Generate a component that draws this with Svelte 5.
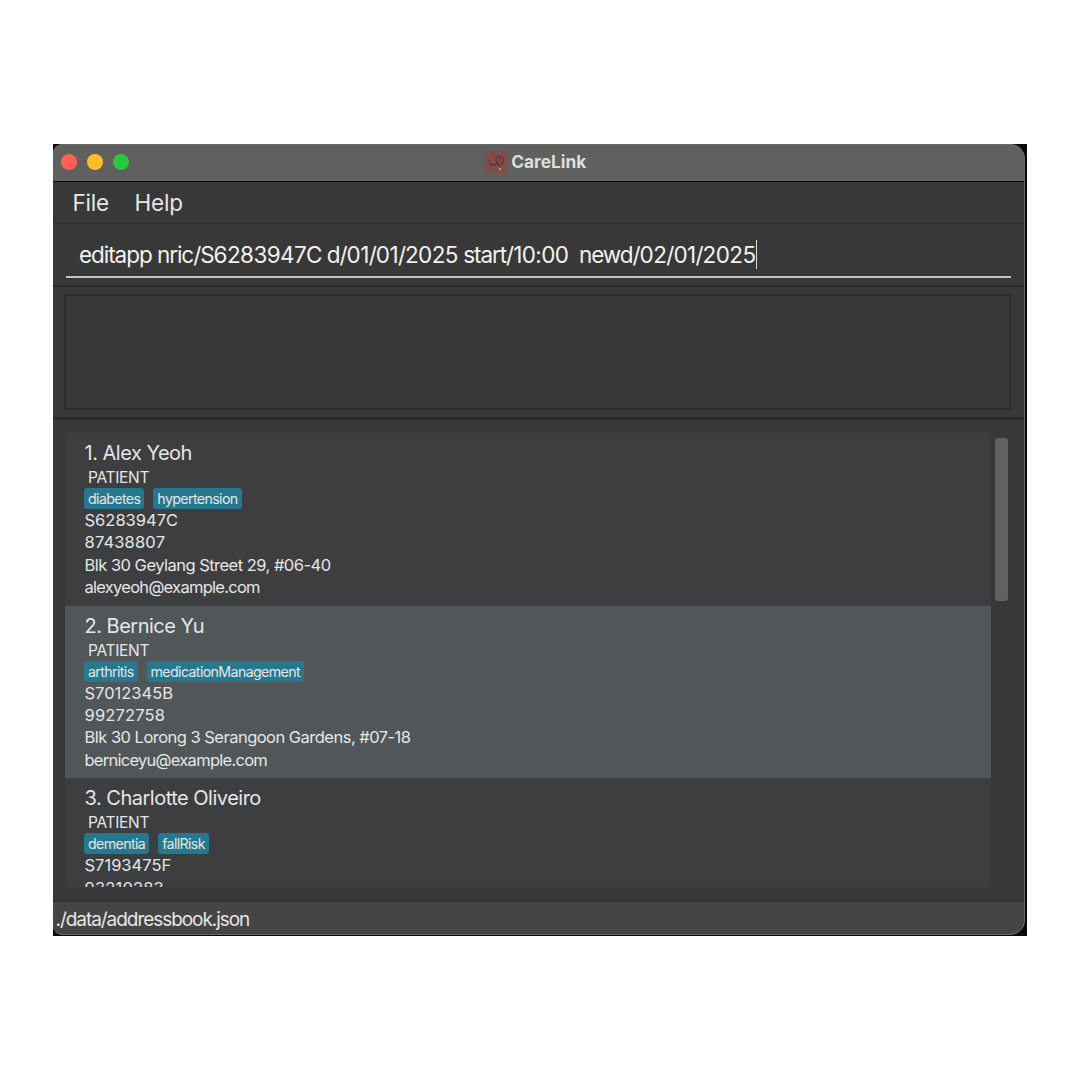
<script>
  const command = 'editapp nric/S6283947C d/01/01/2025 start/10:00\u00a0 newd/02/01/2025';
  // Numbers are tracked wider than words in the command field.
  const runs = command.split(/([\d:]+)/).filter(Boolean);
  const people = [
    { name: '1. Alex Yeoh', tags: ['diabetes', 'hypertension'], id: 'S6283947C', phone: '87438807', address: 'Blk 30 Geylang Street 29, #06-40', email: 'alexyeoh@example.com' },
    { name: '2. Bernice Yu', tags: ['arthritis', 'medicationManagement'], id: 'S7012345B', phone: '99272758', address: 'Blk 30 Lorong 3 Serangoon Gardens, #07-18', email: 'berniceyu@example.com' },
    { name: '3. Charlotte Oliveiro', tags: ['dementia', 'fallRisk'], id: 'S7193475F', phone: '93210283' }
  ];
</script>

<main>
  <div class="backdrop">
    <div class="window">
      <header>
        <div class="lights"><i class="red"></i><i class="amber"></i><i class="green"></i></div>
        <div class="title">
          <svg width="22" height="22" viewBox="0 0 22 22">
            <rect width="22" height="22" rx="1" fill="#834b49" />
            <g fill="none" stroke="#4b3533" stroke-width="1">
              <path d="M4 9c0 5 5 6 8 3.500M5 14c3 1 5-.5 7-2.500M12 12C9 8 12 4 15 6c4-1 5 4 2 7-2 2-4 1.500-5-1" />
              <path d="M12 12c1 2 2 2.500 3 4M15 6c.5 2-.5 4-3 6" />
            </g>
            <circle cx="15" cy="18" r="1.300" fill="#a89a98" />
          </svg>
          <span>CareLink</span>
        </div>
      </header>
      <nav><span>File</span><span>Help</span></nav>
      <section class="command">
        <div class="field"><span class="text">{#each runs as r}<span class:num={/^\d/.test(r)}>{r}</span>{/each}</span><b class="caret"></b></div>
      </section>
      <section class="result"><div class="box"></div></section>
      <section class="content">
        <div class="list">
          {#each people as p, i}
            <article class:alt={i % 2 === 1}>
              <h2>{p.name}</h2>
              <div class="role">PATIENT</div>
              <div class="tags">{#each p.tags as t}<span>{t}</span>{/each}</div>
              <p class="id">{p.id}</p>
              <p class="phone">{p.phone}</p>
              {#if p.address}<p class="address">{p.address}</p>{/if}
              {#if p.email}<p class="email">{p.email}</p>{/if}
            </article>
          {/each}
        </div>
        <div class="scroll"><div class="thumb"></div></div>
      </section>
      <footer>./data/addressbook.json</footer>
    </div>
  </div>
</main>

<style>
  :global(body) { background: #fff; }
  main { box-sizing: border-box; width: 1080px; height: 1080px; padding: 144px 53px; overflow: hidden; font-family: Inter, "Liberation Sans", sans-serif; font-weight: 370; color: #e6e6e6; }
  .backdrop { box-sizing: border-box; width: 974px; height: 792px; background: #090909; padding: 0 2px 1px 0; }
  .window { position: relative; box-sizing: border-box; width: 972px; height: 791px; border-radius: 9px 15px 15px 9px; overflow: hidden; display: flex; flex-direction: column; background: #383838; }
  .window::after { content: ''; position: absolute; inset: 0; border: solid #686868; border-width: 1px 1px 1px 0; border-radius: inherit; pointer-events: none; }
  header { flex: none; height: 38px; box-sizing: border-box; border-bottom: 1px solid #0c0c0c; background: #60605e; display: grid; grid-template-columns: 1fr auto 1fr; align-items: center; }
  .lights { display: flex; gap: 10.400px; padding: 0 0 .5px 7.500px; }
  .lights i { width: 16px; height: 16px; border-radius: 50%; }
  .red { background: #ff5f57; } .amber { background: #febc2e; } .green { background: #28c840; }
  .title { display: flex; align-items: center; gap: 4.500px; padding: 0 7px 2px 0; font-weight: 700; font-size: 17.300px; color: #dededc; }
  nav { flex: none; height: 42px; box-sizing: border-box; border-bottom: 1px solid #2a2a2a; padding-left: 19.500px; display: flex; gap: 25.500px; font-size: 22.500px; line-height: 42px; letter-spacing: -.2px; }
  .command { flex: none; height: 63px; box-sizing: border-box; border-bottom: 2px solid #2b2b2b; padding: 13px 14px 0 13px; }
  .field { height: 41px; box-sizing: border-box; border-bottom: 2px solid #c4c2c0; padding-left: 13px; display: flex; align-items: flex-start; white-space: pre; }
  .text { font-size: 22.500px; line-height: 35px; letter-spacing: -1.050px; color: #f2f2f2; }
  .num { letter-spacing: -.6px; }
  .caret { width: 1.500px; height: 29px; background: #ddd; margin-top: 3px; }
  .result { flex: none; height: 133px; box-sizing: border-box; border-bottom: 3px solid #2b2b2b; padding: 7px 14px 0 11px; }
  .box { height: 116px; box-sizing: border-box; border: 2px solid #2d2d2d; }
  .content { flex: 1; min-height: 0; box-sizing: border-box; padding: 13px 17px 14px 11.500px; display: flex; }
  .list { width: 926.500px; overflow: hidden; background: #3c3e3f; }
  article { box-sizing: border-box; height: 172.600px; padding: 8px 20px 0; background: #3c3e3f; }
  article.alt { background: #515658; }
  h2 { margin: 0; font-weight: 370; font-size: 20px; line-height: 25px; letter-spacing: -.5px; }
  .role { height: 22px; line-height: 23px; padding-left: 3.500px; font-size: 15.500px; letter-spacing: -.3px; }
  .tags { display: flex; gap: 9px; height: 21px; margin-left: -.5px; }
  .tags span { height: 21px; box-sizing: border-box; padding: 0 4px; border-radius: 3px; background: #25788d; font-size: 14.200px; line-height: 21px; letter-spacing: -.62px; }
  p { margin: 0; font-size: 16.500px; line-height: 22.400px; }
  .id { letter-spacing: 0; }
  .phone { letter-spacing: .17px; }
  .address { letter-spacing: -.52px; }
  .email { letter-spacing: -.73px; }
  .scroll { flex: 1; padding: 5px 0 0 4px; }
  .thumb { width: 13px; height: 163px; border-radius: 3px; background: #616161; }
  footer { flex: none; height: 34px; box-sizing: border-box; border-top: 1px solid #303030; background: #454545; padding-left: 2.500px; font-size: 19px; line-height: 35px; letter-spacing: -1.050px; }
</style>
